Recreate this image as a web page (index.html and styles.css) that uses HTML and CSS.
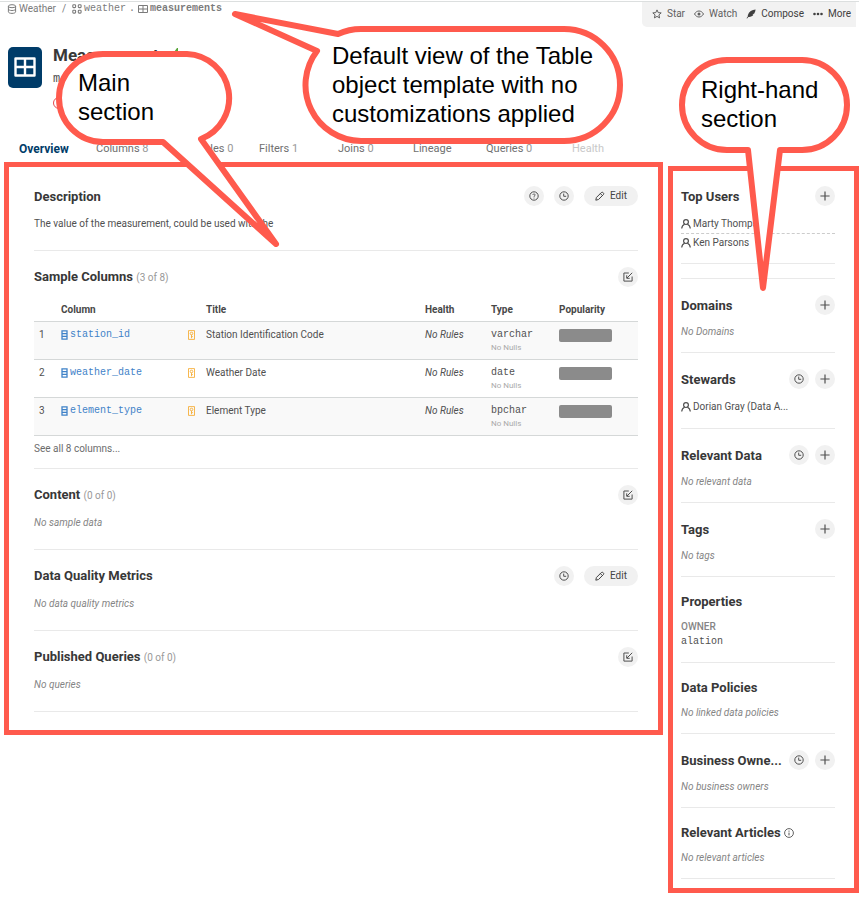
FILE: index.html
```html
<!DOCTYPE html>
<html lang="en">
<head>
<meta charset="utf-8">
<title>measurements</title>
<link rel="stylesheet" href="styles.css">
</head>
<body>
<svg class="sprite" aria-hidden="true">
  <symbol id="i-db" viewBox="0 0 10 10"><g fill="none" stroke="currentColor"><ellipse cx="5" cy="2.2" rx="3.6" ry="1.5"/><path d="M1.4 2.2v5.6c0 .9 1.6 1.6 3.6 1.6s3.6-.7 3.6-1.6V2.2M1.4 5c0 .9 1.6 1.5 3.6 1.5S8.600 5.900 8.600 5"/></g></symbol>
  <symbol id="i-schema" viewBox="0 0 10 10"><g fill="none" stroke="currentColor" stroke-width="1.1"><rect x=".8" y=".8" width="2.800" height="2.800" rx=".8"/><rect x="6.300" y=".8" width="2.800" height="2.800" rx=".8"/><rect x=".8" y="6.300" width="2.800" height="2.800" rx=".8"/><rect x="6.300" y="6.300" width="2.800" height="2.800" rx=".8"/></g></symbol>
  <symbol id="i-table" viewBox="0 0 10 10"><path fill="none" stroke="currentColor" d="M.5 1.500h9v7h-9zM5 1.500v7M.5 5h9"/></symbol>
  <symbol id="i-star" viewBox="0 0 10 10"><path fill="none" stroke="currentColor" stroke-linejoin="round" d="M5 .9l1.200 2.700 3 .3-2.300 2 .7 3L5 7.400 2.400 8.900l.7-3-2.300-2 3-.3z"/></symbol>
  <symbol id="i-eye" viewBox="0 0 10 10"><path fill="none" stroke="currentColor" d="M.5 5C1.600 3.100 3.200 2 5 2s3.400 1.100 4.500 3C8.400 6.900 6.800 8 5 8S1.600 6.900.5 5z"/><circle cx="5" cy="5" r="1.500" fill="currentColor"/></symbol>
  <symbol id="i-feather" viewBox="0 0 10 10"><path fill="currentColor" d="M9.600.6C6 .8 2.900 2.800 1.800 6.200l.1 1L.5 9.200l.6.4 1.300-1.700c2.300.2 4-.7 5-2.200l-1-.2 1.900-.9c.7-1.200 1.200-2.600 1.300-4z"/></symbol>
  <symbol id="i-dots" viewBox="0 0 10 10"><g fill="currentColor"><circle cx="1.500" cy="5" r="1.300"/><circle cx="5" cy="5" r="1.300"/><circle cx="8.500" cy="5" r="1.300"/></g></symbol>
  <symbol id="i-clock" viewBox="0 0 10 10"><g fill="none" stroke="currentColor"><circle cx="5" cy="5" r="4.200"/><path d="M4.700 2.600v2.700h2.500"/></g></symbol>
  <symbol id="i-help" viewBox="0 0 10 10"><g fill="none" stroke="currentColor"><circle cx="5" cy="5" r="4.200"/><path stroke-width=".9" d="M3.900 4c0-1.500 2.300-1.400 2.200 0C6 4.800 5 4.900 5 5.900M5 6.600v.9"/></g></symbol>
  <symbol id="i-info" viewBox="0 0 10 10"><g fill="none" stroke="currentColor"><circle cx="5" cy="5" r="4.400" stroke-width=".9"/><path d="M5 2.600v1.100M5 4.600v2.800"/></g></symbol>
  <symbol id="i-pencil" viewBox="0 0 10 10"><path fill="none" stroke="currentColor" stroke-linejoin="round" d="M.8 9.200l.6-2.700 5-5c1-1 3.100.9 2.100 2l-5 5zM5.400 2.600l2 2"/></symbol>
  <symbol id="i-open" viewBox="0 0 10 10"><g fill="none" stroke="currentColor"><path d="M5.800 1H.9v8.100h8.200V4.500"/><path d="M9.200.8L4 6M3.700 3.300v3h3"/></g></symbol>
  <symbol id="i-plus" viewBox="0 0 10 10"><path fill="none" stroke="currentColor" stroke-width="1.200" d="M5 .4v9.200M.4 5h9.200"/></symbol>
  <symbol id="i-user" viewBox="0 0 10 10"><g fill="none" stroke="currentColor" stroke-width="1.200"><circle cx="5" cy="3.100" r="2.400"/><path d="M.7 9.500C.9 7 2.400 5.700 3.600 5.200M6.400 5.200C7.600 5.700 9.100 7 9.300 9.500"/></g></symbol>
  <symbol id="i-column" viewBox="0 0 7 10"><path fill="none" stroke="currentColor" stroke-width="1.300" d="M1 .8h5v8.400H1zM1 3.600h5M1 6.400h5"/></symbol>
  <symbol id="i-key" viewBox="0 0 7 10"><path fill="none" stroke="currentColor" stroke-width=".8" d="M.5.6h6v8.800h-6z"/><circle cx="3.500" cy="3.500" r="1.300" fill="none" stroke="currentColor" stroke-width=".8"/><path stroke="currentColor" stroke-width=".8" d="M3.500 4.800v3.400M3.500 6.600h1.300"/></symbol>
</svg>

<header class="topbar">
  <nav class="crumbs" aria-label="Breadcrumb">
    <a href="#"><svg class="icon"><use href="#i-db"/></svg>Weather</a>
    <span>/</span>
    <a href="#" class="mono"><svg class="icon"><use href="#i-schema"/></svg>weather</a>
    <span class="mono dot">.</span>
    <a href="#" class="mono strong"><svg class="icon"><use href="#i-table"/></svg>measurements</a>
  </nav>
  <div class="toolbar">
    <button><svg class="icon"><use href="#i-star"/></svg>Star</button>
    <button><svg class="icon"><use href="#i-eye"/></svg>Watch</button>
    <button class="dark"><svg class="icon"><use href="#i-feather"/></svg>Compose</button>
    <button class="dark"><svg class="icon"><use href="#i-dots"/></svg>More</button>
  </div>
</header>

<div class="object">
  <svg class="object-icon" viewBox="0 0 34 41"><rect width="34" height="41" rx="5" fill="#003c69"/><path d="M7.500 11.500h19v17h-19zM17 12v16M8 20h18" fill="none" stroke="#fff" stroke-width="2.400" stroke-linejoin="round"/></svg>
  <div class="object-text">
    <h1>Measurements <svg class="icon good" viewBox="0 0 10 10"><path fill="currentColor" d="M2 5l3-4h1v3h3l-1 5H2z"/></svg></h1>
    <p class="object-name">m</p>
    <svg class="flag" viewBox="0 0 12 12"><circle cx="6" cy="6" r="5.500" fill="none" stroke="currentColor"/><path d="M6 3v4M6 8v1" stroke="currentColor"/></svg>
  </div>
</div>

<nav class="tabs" aria-label="Sections">
  <a href="#" class="active">Overview</a>
  <a href="#">Columns <span>8</span></a>
  <a href="#">Samples <span>0</span></a>
  <a href="#">Filters <span>1</span></a>
  <a href="#">Joins <span>0</span></a>
  <a href="#">Lineage</a>
  <a href="#">Queries <span>0</span></a>
  <a href="#" class="off">Health</a>
</nav>

<div class="layout">
  <main class="frame main">
    <section>
      <div class="head"><h2>Description</h2>
        <button class="round" aria-label="Help"><svg class="icon"><use href="#i-help"/></svg></button>
        <button class="round" aria-label="History"><svg class="icon"><use href="#i-clock"/></svg></button>
        <button class="edit"><svg class="icon"><use href="#i-pencil"/></svg>Edit</button></div>
      <p>The value of the measurement, could be used with the</p>
    </section>
    <section class="sample">
      <div class="head"><h2>Sample Columns <small>(3 of 8)</small></h2>
        <button class="round" aria-label="Open columns"><svg class="icon"><use href="#i-open"/></svg></button></div>
      <table>
        <colgroup><col class="c-num"><col class="c-name"><col class="c-key"><col><col class="c-health"><col class="c-type"><col class="c-pop"></colgroup>
        <thead><tr><th></th><th>Column</th><th></th><th>Title</th><th>Health</th><th>Type</th><th>Popularity</th></tr></thead>
        <tbody>
          <tr><td class="num">1</td><td><a href="#" class="mono"><svg class="slim"><use href="#i-column"/></svg>station_id</a></td><td><svg class="slim key"><use href="#i-key"/></svg></td><td>Station Identification Code</td><td><em>No Rules</em></td><td><span class="mono">varchar</span><small>No Nulls</small></td><td><div class="bar"></div></td></tr>
          <tr><td class="num">2</td><td><a href="#" class="mono"><svg class="slim"><use href="#i-column"/></svg>weather_date</a></td><td><svg class="slim key"><use href="#i-key"/></svg></td><td>Weather Date</td><td><em>No Rules</em></td><td><span class="mono">date</span><small>No Nulls</small></td><td><div class="bar"></div></td></tr>
          <tr><td class="num">3</td><td><a href="#" class="mono"><svg class="slim"><use href="#i-column"/></svg>element_type</a></td><td><svg class="slim key"><use href="#i-key"/></svg></td><td>Element Type</td><td><em>No Rules</em></td><td><span class="mono">bpchar</span><small>No Nulls</small></td><td><div class="bar"></div></td></tr>
        </tbody>
      </table>
      <a href="#" class="see-all">See all 8 columns...</a>
    </section>
    <section>
      <div class="head"><h2>Content <small>(0 of 0)</small></h2>
        <button class="round" aria-label="Open content"><svg class="icon"><use href="#i-open"/></svg></button></div>
      <p class="none">No sample data</p>
    </section>
    <section>
      <div class="head"><h2>Data Quality Metrics</h2>
        <button class="round" aria-label="History"><svg class="icon"><use href="#i-clock"/></svg></button>
        <button class="edit"><svg class="icon"><use href="#i-pencil"/></svg>Edit</button></div>
      <p class="none">No data quality metrics</p>
    </section>
    <section>
      <div class="head"><h2>Published Queries <small>(0 of 0)</small></h2>
        <button class="round" aria-label="Open queries"><svg class="icon"><use href="#i-open"/></svg></button></div>
      <p class="none">No queries</p>
    </section>
  </main>

  <aside class="frame side">
    <section>
      <div class="head"><h2>Top Users</h2><button class="round" aria-label="Add user"><svg class="icon"><use href="#i-plus"/></svg></button></div>
      <ul><li><svg class="icon"><use href="#i-user"/></svg>Marty Thompson</li><li><svg class="icon"><use href="#i-user"/></svg>Ken Parsons</li></ul>
    </section>
    <div class="spacer"></div>
    <section>
      <div class="head"><h2>Domains</h2><button class="round" aria-label="Add domain"><svg class="icon"><use href="#i-plus"/></svg></button></div>
      <p class="none">No Domains</p>
    </section>
    <section>
      <div class="head"><h2>Stewards</h2><button class="round" aria-label="History"><svg class="icon"><use href="#i-clock"/></svg></button><button class="round" aria-label="Add steward"><svg class="icon"><use href="#i-plus"/></svg></button></div>
      <ul><li><svg class="icon"><use href="#i-user"/></svg>Dorian Gray (Data A...</li></ul>
    </section>
    <section>
      <div class="head"><h2>Relevant Data</h2><button class="round" aria-label="History"><svg class="icon"><use href="#i-clock"/></svg></button><button class="round" aria-label="Add data"><svg class="icon"><use href="#i-plus"/></svg></button></div>
      <p class="none">No relevant data</p>
    </section>
    <section>
      <div class="head"><h2>Tags</h2><button class="round" aria-label="Add tag"><svg class="icon"><use href="#i-plus"/></svg></button></div>
      <p class="none">No tags</p>
    </section>
    <section>
      <div class="head"><h2>Properties</h2></div>
      <dl><dt>OWNER</dt><dd class="mono">alation</dd></dl>
    </section>
    <section>
      <div class="head"><h2>Data Policies</h2></div>
      <p class="none">No linked data policies</p>
    </section>
    <section>
      <div class="head"><h2>Business Owne...</h2><button class="round" aria-label="History"><svg class="icon"><use href="#i-clock"/></svg></button><button class="round" aria-label="Add owner"><svg class="icon"><use href="#i-plus"/></svg></button></div>
      <p class="none">No business owners</p>
    </section>
    <section>
      <div class="head"><h2>Relevant Articles <svg class="icon info"><use href="#i-info"/></svg></h2></div>
      <p class="none">No relevant articles</p>
    </section>
  </aside>
</div>

<div class="callout callout-main">
  <svg viewBox="50 45 235 210"><path d="M103 54H187A44 44 0 0 1 201 139L276 244L163 142H103A44 44 0 0 1 103 54Z"/></svg>
  <p>Main<br>section</p>
</div>
<div class="callout callout-view">
  <svg viewBox="225 5 405 145"><path d="M361 29H564A56 56 0 0 1 564 141H361A56 56 0 0 1 317 51L235 14L338 34A56 56 0 0 1 361 29Z"/></svg>
  <p>Default view of the Table<br>object template with no<br>customizations applied</p>
</div>
<div class="callout callout-side">
  <svg viewBox="675 50 180 245"><path d="M727 60H802A45 45 0 0 1 802 150H780L763 288L748 150H727A45 45 0 0 1 727 60Z"/></svg>
  <p>Right-hand<br>section</p>
</div>
</body>
</html>
```
FILE: styles.css
```css
* { box-sizing: border-box; }
body {
  margin: 0;
  position: relative;
  background: #fff;
  color: #505050;
  font: 10px/16px Roboto, "Liberation Sans", sans-serif;
}
h1, h2, p, ul, dl, dd { margin: 0; padding: 0; }
ul { list-style: none; }
a { color: inherit; text-decoration: none; }
button { border: 0; padding: 0; background: none; color: inherit; font: inherit; }
.mono { font-family: "Liberation Mono", monospace; }
.sprite { display: none; }
.icon { width: 10px; height: 10px; flex: none; }

.topbar {
  display: flex;
  justify-content: space-between;
  align-items: flex-start;
  margin-top: 1px;
  padding: 0 3px 0 7px;
  border-top: 1px solid #dcdfdf;
}
.crumbs { display: flex; gap: 6px; color: #7b7b7b; line-height: 14px; }
.crumbs a { display: flex; align-items: center; gap: 2px; }
.crumbs .strong { font-weight: bold; }
.crumbs .dot { margin: 0 -3px; }
.toolbar {
  display: flex;
  gap: 9px;
  padding: 4px 5px 5px 10px;
  background: #f2f2f2;
  border-bottom-left-radius: 5px;
}
.toolbar button { display: flex; align-items: center; gap: 5px; color: #606060; }
.toolbar .dark { color: #404040; }

.object { display: flex; gap: 11px; padding: 20px 8px 0; height: 114px; }
.object-icon { width: 34px; height: 41px; }
h1 { font-size: 17px; line-height: 16px; color: #383838; }
.good { color: #57a639; vertical-align: top; }
.object-name { margin-top: 8px; font: 12px/16px "Liberation Mono", monospace; }
.flag { display: block; width: 12px; height: 12px; margin-top: 10px; color: #e5484d; }

.tabs {
  display: grid;
  grid-template-columns: 77fr 86fr 77fr 79fr 75fr 73fr 86fr 287fr;
  padding-left: 19px;
  font-size: 11px;
  color: #707070;
}
.tabs span { color: #989898; }
.tabs .active { font-size: 12px; font-weight: bold; color: #003c69; }
.tabs .off { color: #c8c8c8; }

.layout {
  display: grid;
  grid-template-columns: 1fr 191px;
  align-items: start;
  gap: 5px;
  padding: 5px 0 8px 4px;
}
.frame { border: 5px solid #ff5a4d; }
.main { padding: 3px 20px 18px 25px; }
.side { margin-top: 4px; padding: 0 19px 9px 8px; }
section { padding: 16px 0 18px; border-bottom: 1px solid #e9e9e9; }
.side section { padding-bottom: 12px; }
.side section:first-child { padding-top: 15px; }
.spacer { height: 15px; border-bottom: 1px solid #e9e9e9; }
.head { display: flex; align-items: center; gap: 10px; min-height: 20px; margin-bottom: 10px; }
.side .head { gap: 6px; min-height: 17px; margin-bottom: 9px; }
h2 { flex: 1; font-size: 13px; line-height: 17px; color: #383838; white-space: nowrap; }
h2 small { font-size: 10px; font-weight: normal; color: #999; }
.round { display: grid; place-items: center; width: 20px; height: 20px; border-radius: 50%; background: #f1f1f1; flex: none; }
.edit { display: flex; align-items: center; justify-content: center; gap: 5px; width: 54px; height: 20px; border-radius: 10px; background: #f1f1f1; color: #444; }
.none { font-style: italic; color: #858585; }
.info { vertical-align: -1px; color: #505050; }

.sample { padding-bottom: 11px; }
table { width: 100%; table-layout: fixed; border-collapse: collapse; }
.c-num { width: 27px; }
.c-name { width: 127px; }
.c-key { width: 18px; }
.c-health { width: 66px; }
.c-type { width: 68px; }
.c-pop { width: 79px; }
th { height: 24px; padding: 2px 0 0; text-align: left; color: #484848; border-bottom: 1px solid #d5d8d8; }
td { padding: 5px 0 6px; vertical-align: top; border-bottom: 1px solid #d5d8d8; }
tbody tr:nth-child(odd) { background: #f9f9f9; }
td.num { padding-left: 5px; }
td a { display: flex; align-items: center; gap: 2px; color: #3f82c8; }
td small { display: block; font-size: 8px; line-height: 10px; color: #aaa; }
td .mono { font-size: 10px; }
span.mono { display: block; }
.slim { width: 7px; height: 10px; flex: none; }
.key { display: block; margin-top: 3px; color: #f5a623; }
.bar { width: 53px; height: 13px; margin-top: 2px; border-radius: 2px; background: #8b8b8b; }
.see-all { display: block; margin-top: 5px; color: #6c6c6c; }

li { display: flex; align-items: center; gap: 2px; height: 18px; white-space: nowrap; }
li + li { border-top: 1px dashed #ccc; }
dl { line-height: 15px; }
dt { font-weight: 500; color: #858585; }
dd { line-height: 16px; }

.callout { position: absolute; color: #000; font: 24px/29px "Liberation Sans", Arial, sans-serif; }
.callout svg { display: block; width: 100%; height: 100%; }
.callout path { fill: #fff; stroke: #ff5a4d; stroke-width: 6; stroke-linejoin: round; }
.callout p { position: absolute; white-space: nowrap; }
.callout-main { left: 50px; top: 45px; width: 235px; height: 210px; }
.callout-main p { left: 28px; top: 23px; }
.callout-view { left: 225px; top: 5px; width: 405px; height: 145px; }
.callout-view p { left: 107px; top: 36px; }
.callout-side { left: 675px; top: 50px; width: 180px; height: 245px; }
.callout-side p { left: 26px; top: 25px; }
```
